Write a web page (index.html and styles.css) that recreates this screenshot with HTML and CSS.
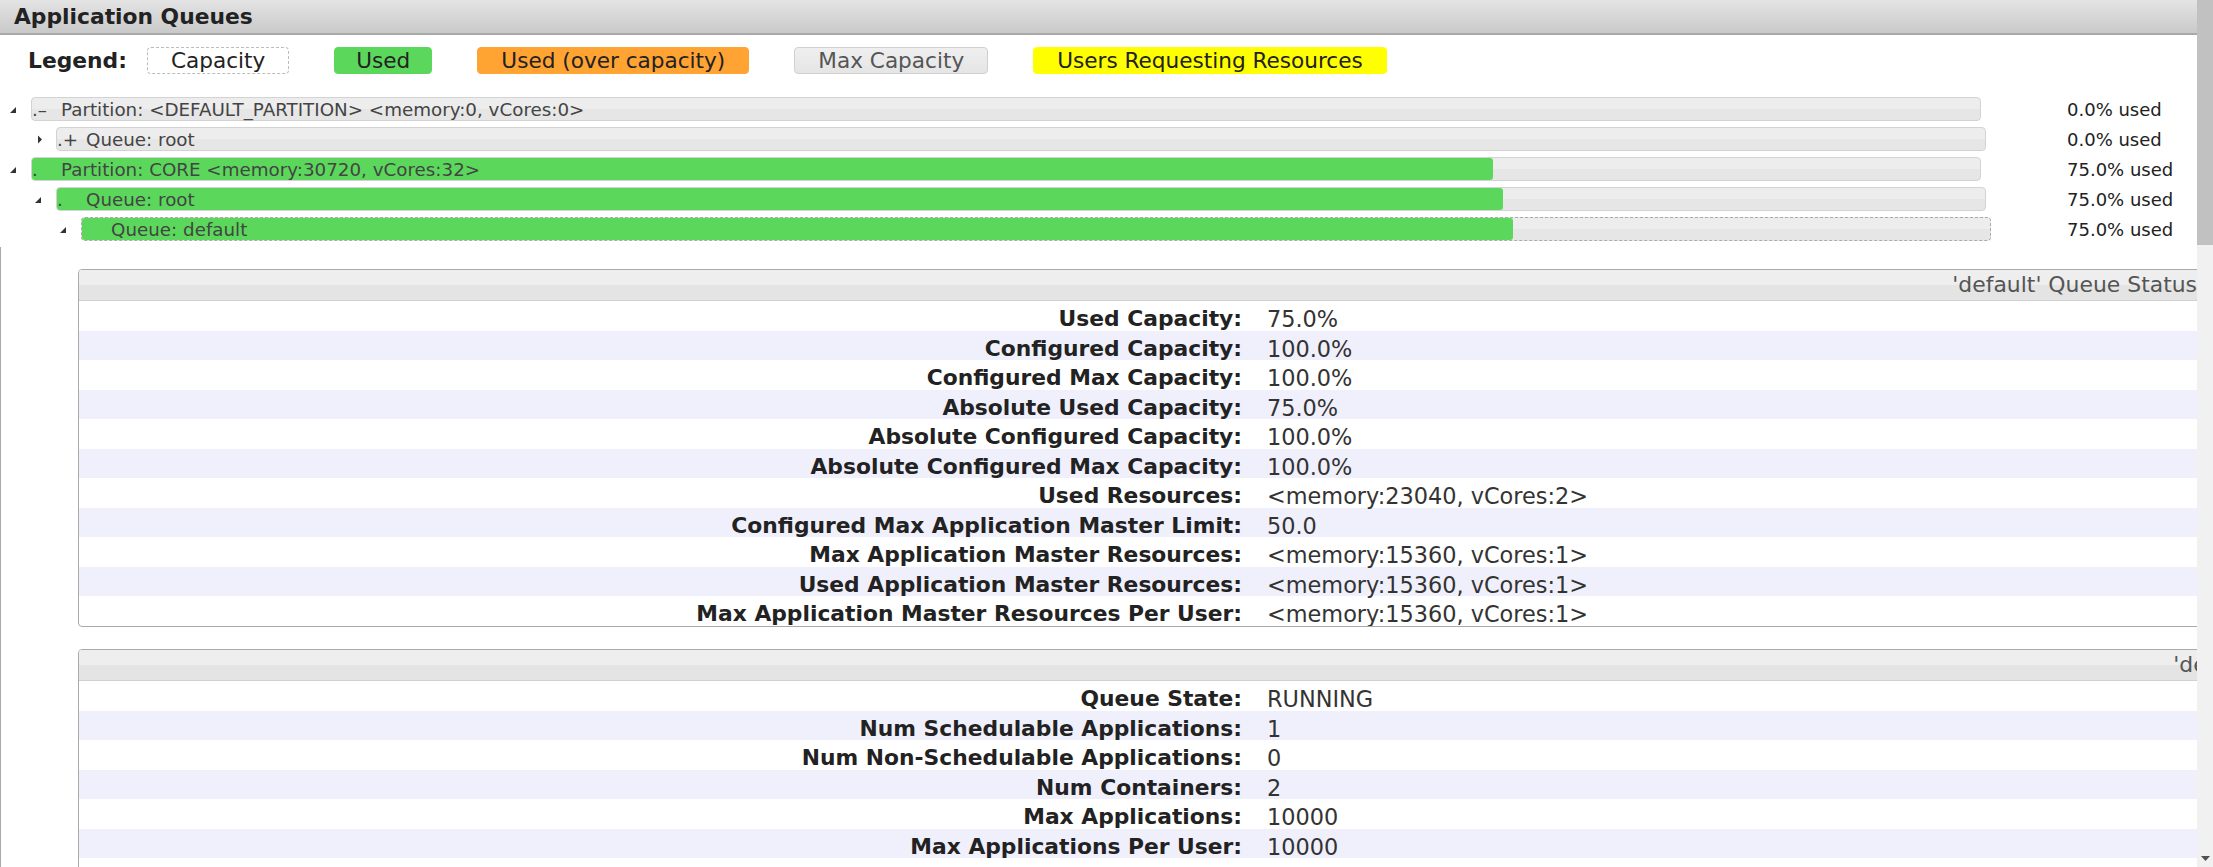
FILE: index.html
```html
<!DOCTYPE html>
<html>
<head>
<meta charset="utf-8">
<title>Application Queues</title>
<link rel="stylesheet" href="styles.css">
</head>
<body>
<div class="page">
  <div class="main">
    <div class="title">Application Queues</div>

    <div class="legend">
      <span class="legend-label">Legend:</span>
      <span class="lg lg-cap">Capacity</span>
      <span class="lg lg-used">Used</span>
      <span class="lg lg-over">Used (over capacity)</span>
      <span class="lg lg-max">Max Capacity</span>
      <span class="lg lg-users">Users Requesting Resources</span>
    </div>

    <ul class="tree">
      <li class="row d0">
        <span class="tog"><svg width="8" height="8" viewBox="0 0 8 8"><polygon points="7,1 7,7 1,7" fill="#333"/></svg></span>
        <span class="bar w0"><span class="ico">.–</span><span class="name">Partition: &lt;DEFAULT_PARTITION&gt; &lt;memory:0, vCores:0&gt;</span></span>
        <span class="pct">0.0% used</span>
      </li>
      <li class="row d1">
        <span class="tog closed"><svg width="8" height="9" viewBox="0 0 8 9"><polygon points="2,0.5 6,4.5 2,8.5" fill="#333"/></svg></span>
        <span class="bar w1"><span class="ico">.+</span><span class="name">Queue: root</span></span>
        <span class="pct">0.0% used</span>
      </li>
      <li class="row d0">
        <span class="tog"><svg width="8" height="8" viewBox="0 0 8 8"><polygon points="7,1 7,7 1,7" fill="#333"/></svg></span>
        <span class="bar w0"><span class="fill" style="width:75%"></span><span class="ico">.</span><span class="name">Partition: CORE &lt;memory:30720, vCores:32&gt;</span></span>
        <span class="pct">75.0% used</span>
      </li>
      <li class="row d1">
        <span class="tog"><svg width="8" height="8" viewBox="0 0 8 8"><polygon points="7,1 7,7 1,7" fill="#333"/></svg></span>
        <span class="bar w1"><span class="fill" style="width:75%"></span><span class="ico">.</span><span class="name">Queue: root</span></span>
        <span class="pct">75.0% used</span>
      </li>
      <li class="row d2">
        <span class="tog"><svg width="8" height="8" viewBox="0 0 8 8"><polygon points="7,1 7,7 1,7" fill="#333"/></svg></span>
        <span class="bar w2 sel"><span class="fill" style="width:75%"></span><span class="ico"></span><span class="name">Queue: default</span></span>
        <span class="pct">75.0% used</span>
      </li>
    </ul>

    <div class="details">
      <div class="info info1">
        <div class="info-head">'default' Queue Status</div>
        <div class="info-body">
          <div class="irow"><span class="k">Used Capacity:</span><span class="v">75.0%</span></div>
          <div class="irow"><span class="k">Configured Capacity:</span><span class="v">100.0%</span></div>
          <div class="irow"><span class="k">Configured Max Capacity:</span><span class="v">100.0%</span></div>
          <div class="irow"><span class="k">Absolute Used Capacity:</span><span class="v">75.0%</span></div>
          <div class="irow"><span class="k">Absolute Configured Capacity:</span><span class="v">100.0%</span></div>
          <div class="irow"><span class="k">Absolute Configured Max Capacity:</span><span class="v">100.0%</span></div>
          <div class="irow"><span class="k">Used Resources:</span><span class="v">&lt;memory:23040, vCores:2&gt;</span></div>
          <div class="irow"><span class="k">Configured Max Application Master Limit:</span><span class="v">50.0</span></div>
          <div class="irow"><span class="k">Max Application Master Resources:</span><span class="v">&lt;memory:15360, vCores:1&gt;</span></div>
          <div class="irow"><span class="k">Used Application Master Resources:</span><span class="v">&lt;memory:15360, vCores:1&gt;</span></div>
          <div class="irow"><span class="k">Max Application Master Resources Per User:</span><span class="v">&lt;memory:15360, vCores:1&gt;</span></div>
        </div>
      </div>

      <div class="info info2">
        <div class="info-head">'default' Queue Status</div>
        <div class="info-body">
          <div class="irow"><span class="k">Queue State:</span><span class="v">RUNNING</span></div>
          <div class="irow"><span class="k">Num Schedulable Applications:</span><span class="v">1</span></div>
          <div class="irow"><span class="k">Num Non-Schedulable Applications:</span><span class="v">0</span></div>
          <div class="irow"><span class="k">Num Containers:</span><span class="v">2</span></div>
          <div class="irow"><span class="k">Max Applications:</span><span class="v">10000</span></div>
          <div class="irow"><span class="k">Max Applications Per User:</span><span class="v">10000</span></div>
          <div class="irow"><span class="k"></span><span class="v"></span></div>
        </div>
      </div>
    </div>
  </div>

  <div class="scrollbar">
    <div class="thumb"></div>
    <div class="track"></div>
    <div class="sb-btn"><svg width="9" height="5" viewBox="0 0 9 5"><polygon points="0,0 9,0 4.5,5" fill="#505050"/></svg></div>
  </div>
</div>
</body>
</html>
```

FILE: styles.css
```css
html, body {
  margin: 0;
  padding: 0;
  overflow: hidden;
  background: #fff;
}

body {
  font-family: "DejaVu Sans", Verdana, sans-serif;
  color: #222;
}

.page {
  display: flex;
  width: 2213px;
  height: 867px;
  overflow: hidden;
}

.main {
  flex: 1 1 auto;
  min-width: 0;
  overflow: hidden;
}

/* fake browser scrollbar */
.scrollbar {
  flex: 0 0 16px;
  background: #f1f1f1;
  display: flex;
  flex-direction: column;
}

.thumb {
  height: 245px;
  background: #c1c1c1;
}

.track {
  flex: 1;
}

.sb-btn {
  height: 17px;
  display: flex;
  align-items: center;
  justify-content: center;
}

.sb-btn svg {
  display: block;
}

/* title bar */
.title {
  height: 33px;
  border-bottom: 2px solid #a9a9a9;
  background: linear-gradient(#e4e4e4, #c9c9c9);
  padding-left: 14px;
  font-weight: bold;
  font-size: 21.8px;
  line-height: 33px;
  color: #222;
}

/* legend */
.legend {
  display: flex;
  align-items: center;
  margin-top: 12px;
  padding-left: 28px;
  height: 27px;
}

.legend-label {
  font-weight: bold;
  font-size: 21.8px;
  margin-right: 20px;
}

.lg {
  box-sizing: border-box;
  height: 27px;
  line-height: 25px;
  padding: 0 23px;
  border: 1px solid transparent;
  border-radius: 4px;
  font-size: 21.6px;
  margin-right: 45px;
  color: #222;
  white-space: nowrap;
}

.lg-cap {
  border: 1px dashed #bbb;
  background: #fff;
}

.lg-used {
  background: #5bd85b;
  border-color: #5bd85b;
  padding: 0 21px;
}

.lg-over {
  background: #ffa333;
  border-color: #ffa333;
}

.lg-max {
  background: linear-gradient(#efefef, #e5e5e5);
  border-color: #d0d0d0;
  color: #555;
}

.lg-users {
  background: #ffff00;
  border-color: #ffff00;
}

/* queue tree */
.tree {
  list-style: none;
  margin: 20px 0 0;
  padding: 0;
}

.row {
  display: flex;
  align-items: center;
  height: 30px;
}

.row.d0 { padding-left: 6px; }
.row.d1 { padding-left: 31px; }
.row.d2 { padding-left: 56px; }

.tog {
  box-sizing: border-box;
  flex: 0 0 25px;
  display: flex;
  align-items: center;
  padding-left: 3px;
  padding-top: 2px;
}

.tog.closed {
  padding-left: 5px;
  padding-top: 0;
}

.tog svg {
  display: block;
}

.bar {
  position: relative;
  box-sizing: border-box;
  flex: 0 0 auto;
  height: 24px;
  border: 1px solid #d3d3d3;
  border-radius: 4px;
  background: linear-gradient(#ededed 50%, #e6e6e6 50%);
  display: flex;
  align-items: center;
  font-size: 18.3px;
  color: #444;
  white-space: nowrap;
}

.w0 { width: 1950px; }
.w1 { width: 1930px; }
.w2 { width: 1910px; }

.bar.sel {
  border: 1px dashed #aaa;
}

.fill {
  position: absolute;
  left: 0;
  top: 0;
  bottom: 0;
  background: #5bd85b;
  border-radius: 3px;
}

.ico {
  position: relative;
  flex: 0 0 29px;
}

.name {
  position: relative;
}

.pct {
  margin-left: auto;
  flex: 0 0 130px;
  font-size: 18px;
  color: #222;
  white-space: nowrap;
}

/* queue status tables */
.details {
  margin-top: 3px;
  border-left: 1px solid #aaa;
  padding: 22px 0 0 77px;
}

.info {
  box-sizing: border-box;
  border: 1px solid #aaa;
  border-radius: 4px;
  background: #fff;
  overflow: hidden;
}

.info1 { width: 2128px; }
.info2 { width: 2349px; margin-top: 22px; }

.info-head {
  height: 30px;
  border-bottom: 1px solid #d0d0d0;
  background: linear-gradient(#eeeeee 50%, #e4e4e4 50%);
  text-align: right;
  padding-right: 8px;
  font-size: 21.9px;
  line-height: 30px;
  color: #555;
  white-space: nowrap;
}

.irow {
  display: grid;
  grid-template-columns: 1175px 1fr;
  box-sizing: border-box;
  height: 29.55px;
  padding-top: 7px;
  line-height: 22.55px;
}

.irow:nth-child(even) {
  background: #f0f0fc;
}

.k {
  font-weight: bold;
  font-size: 21.8px;
  text-align: right;
  padding-right: 12px;
  color: #222;
  white-space: nowrap;
}

.v {
  padding-left: 13px;
  font-size: 22.4px;
  color: #333;
  white-space: nowrap;
}
```
